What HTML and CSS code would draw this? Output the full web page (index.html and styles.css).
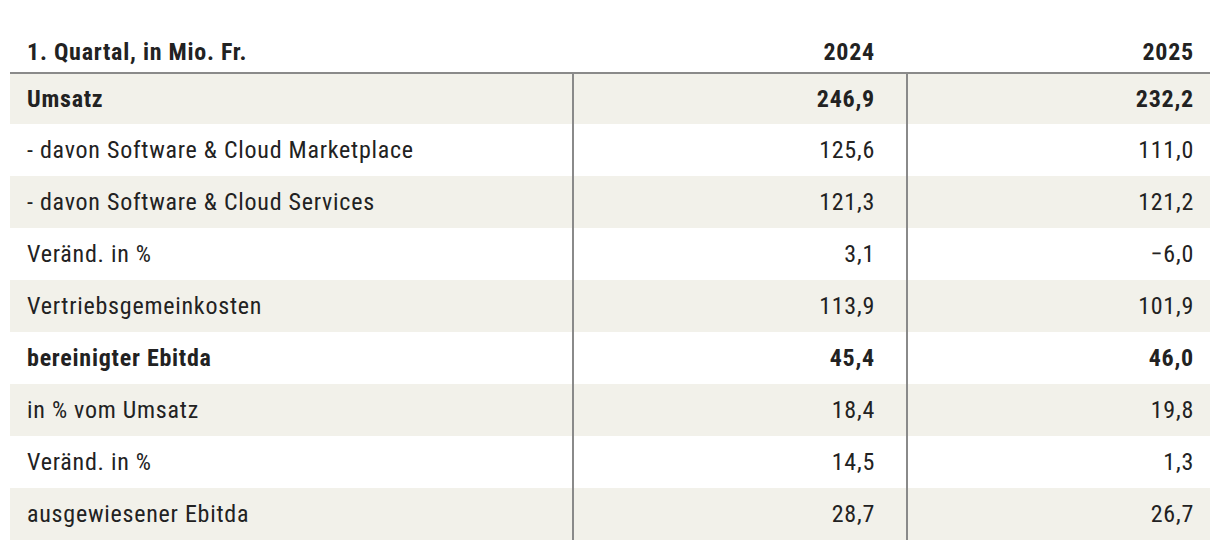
FILE: index.html
```html
<!DOCTYPE html>
<html lang="de">
<head>
<meta charset="utf-8">
<title>1. Quartal</title>
<link rel="stylesheet" href="styles.css">
</head>
<body>
<div class="wrap">
  <div class="table">
    <div class="row head">
      <div class="cell c1">1. Quartal, in Mio. Fr.</div>
      <div class="cell c2">2024</div>
      <div class="cell c3">2025</div>
    </div>
    <div class="row alt bold first">
      <div class="cell c1">Umsatz</div>
      <div class="cell c2">246,9</div>
      <div class="cell c3">232,2</div>
    </div>
    <div class="row">
      <div class="cell c1">- davon Software &amp; Cloud Marketplace</div>
      <div class="cell c2">125,6</div>
      <div class="cell c3">111,0</div>
    </div>
    <div class="row alt">
      <div class="cell c1">- davon Software &amp; Cloud Services</div>
      <div class="cell c2">121,3</div>
      <div class="cell c3">121,2</div>
    </div>
    <div class="row">
      <div class="cell c1">Veränd. in %</div>
      <div class="cell c2">3,1</div>
      <div class="cell c3">−6,0</div>
    </div>
    <div class="row alt">
      <div class="cell c1">Vertriebsgemeinkosten</div>
      <div class="cell c2">113,9</div>
      <div class="cell c3">101,9</div>
    </div>
    <div class="row bold">
      <div class="cell c1">bereinigter Ebitda</div>
      <div class="cell c2">45,4</div>
      <div class="cell c3">46,0</div>
    </div>
    <div class="row alt">
      <div class="cell c1">in % vom Umsatz</div>
      <div class="cell c2">18,4</div>
      <div class="cell c3">19,8</div>
    </div>
    <div class="row">
      <div class="cell c1">Veränd. in %</div>
      <div class="cell c2">14,5</div>
      <div class="cell c3">1,3</div>
    </div>
    <div class="row alt">
      <div class="cell c1">ausgewiesener Ebitda</div>
      <div class="cell c2">28,7</div>
      <div class="cell c3">26,7</div>
    </div>
  </div>
</div>
</body>
</html>
```

FILE: styles.css
```css
html, body {
  margin: 0;
  padding: 0;
  background: #ffffff;
}

.wrap {
  padding: 0 10px;
}

.table {
  width: 1200px;
  font-family: "Roboto Condensed", "Liberation Sans Narrow", "DejaVu Sans Condensed", sans-serif;
  font-stretch: condensed;
  font-size: 24px;
  letter-spacing: 0.75px;
  color: #222222;
}

.row {
  display: grid;
  grid-template-columns: 562px 334px 304px;
  height: 52px;
  line-height: 52px;
}

.row.alt {
  background: #f2f1ea;
}

.row.bold {
  font-weight: 700;
}

.row.first {
  border-top: 2px solid #8a8a8a;
  height: 50px;
  line-height: 50px;
}

.cell {
  box-sizing: border-box;
  white-space: nowrap;
}

.c1 {
  padding-left: 17px;
}

.c2 {
  text-align: right;
  padding-right: 31px;
  border-left: 2px solid #8a8a8a;
}

.c3 {
  text-align: right;
  padding-right: 16px;
  border-left: 2px solid #8a8a8a;
}

.row.head {
  height: auto;
  line-height: 30px;
  padding: 37px 0 5px;
  font-weight: 700;
}

.row.head .cell {
  border-left: none;
}
```
